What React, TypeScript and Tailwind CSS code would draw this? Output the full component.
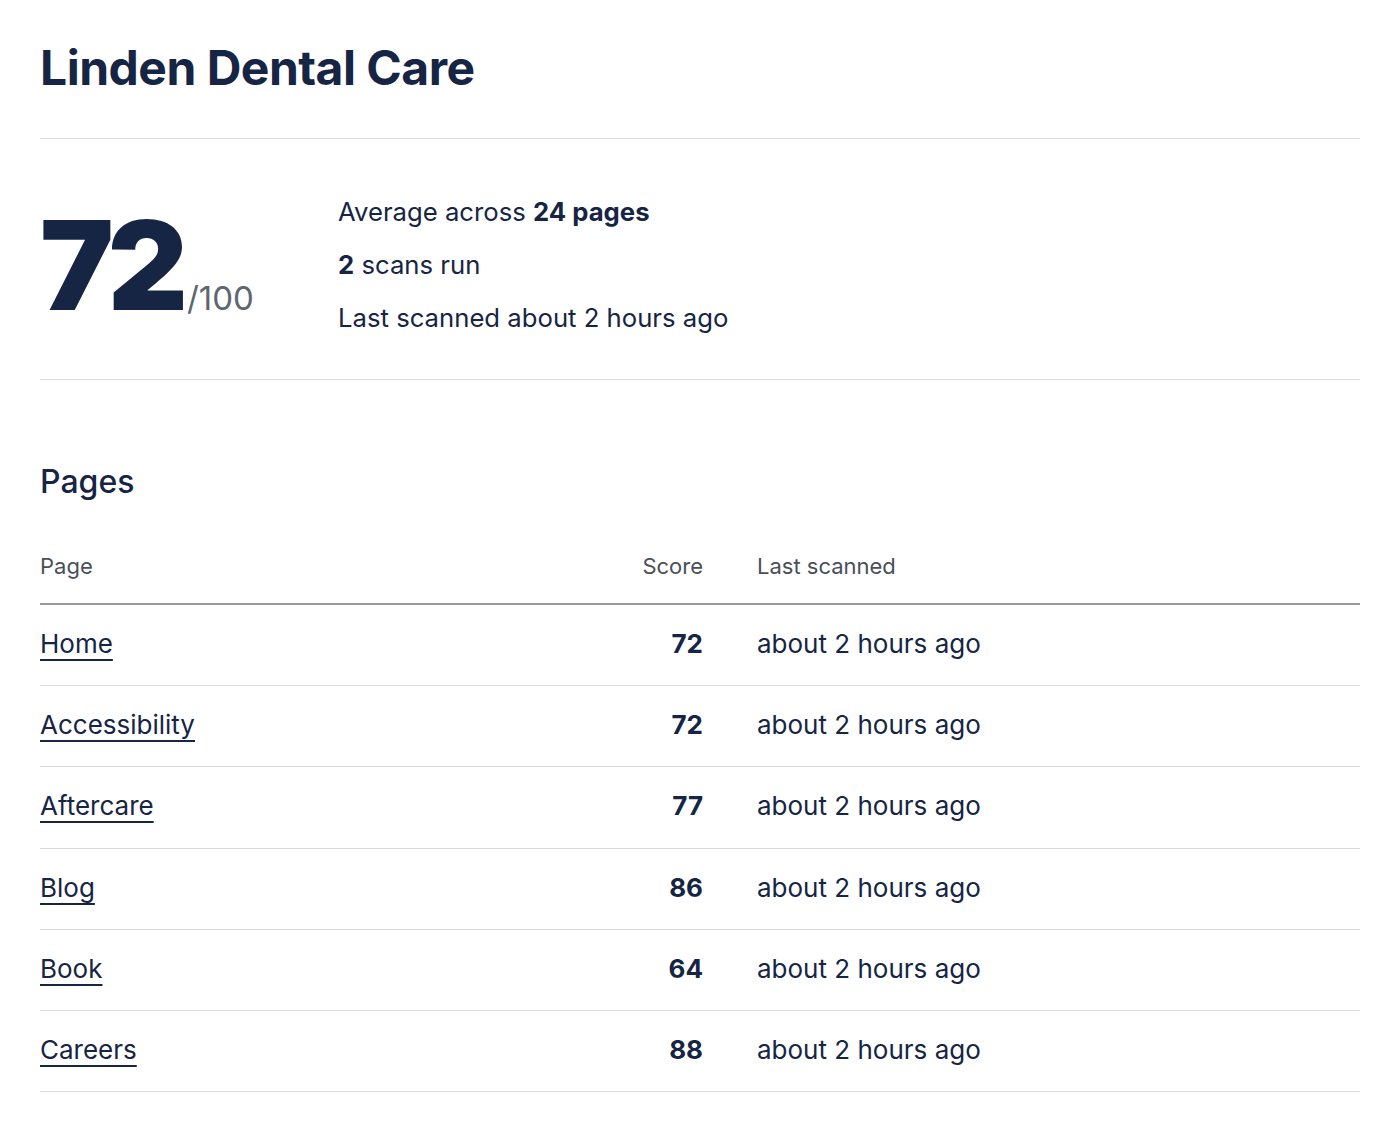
import React from "react";

const rows = [
  { name: "Home", score: 72 },
  { name: "Accessibility", score: 72 },
  { name: "Aftercare", score: 77 },
  { name: "Blog", score: 86 },
  { name: "Book", score: 64 },
  { name: "Careers", score: 88 },
];

export default function App() {
  return (
    <div
      className="min-h-screen bg-white text-[#162544]"
      style={{ fontFamily: "Inter, 'Noto Sans', sans-serif" }}
    >
      <main className="px-10">
        <header className="pt-[40px] pb-[42px] border-b border-[#d9d9d9]">
          <h1 className="text-[48px] leading-[56px] font-bold tracking-[-0.5px]">Linden Dental Care</h1>
        </header>

        <section className="flex items-start pt-[46px] pb-[35px] border-b border-[#d9d9d9]">
          <div className="w-[298px] flex items-baseline mt-[18px]">
            <span className="text-[124px] leading-none font-black tracking-[-6px]">72</span>
            <span className="text-[33px] leading-none text-[#5f6672] ml-[5px]">/100</span>
          </div>
          <div className="text-[25.7px] leading-[53px]">
            <p>
              Average across <strong className="font-bold">24 pages</strong>
            </p>
            <p>
              <strong className="font-bold">2</strong> scans run
            </p>
            <p>Last scanned about 2 hours ago</p>
          </div>
        </section>

        <section className="pt-[82px]">
          <h2 className="text-[32px] leading-[40px] font-medium">Pages</h2>
          <div className="mt-[50px] grid grid-cols-[1fr_120px_627px] text-[22px] leading-[28px] text-[#4a4f5a] pb-[23px] border-b-2 border-[#9a9a9a]">
            <div>Page</div>
            <div className="text-right pr-[30px]">Score</div>
            <div className="pl-6">Last scanned</div>
          </div>
          {rows.map((r) => (
            <div
              key={r.name}
              className="grid grid-cols-[1fr_120px_627px] text-[26px] leading-[28px] pt-[25px] pb-[27.2px] border-b border-[#d9d9d9]"
            >
              <div>
                <a href="#" className="underline underline-offset-[6px] decoration-[2px]">
                  {r.name}
                </a>
              </div>
              <div className="text-right pr-[30px] font-bold">{r.score}</div>
              <div className="pl-6">about 2 hours ago</div>
            </div>
          ))}
        </section>
      </main>
    </div>
  );
}
